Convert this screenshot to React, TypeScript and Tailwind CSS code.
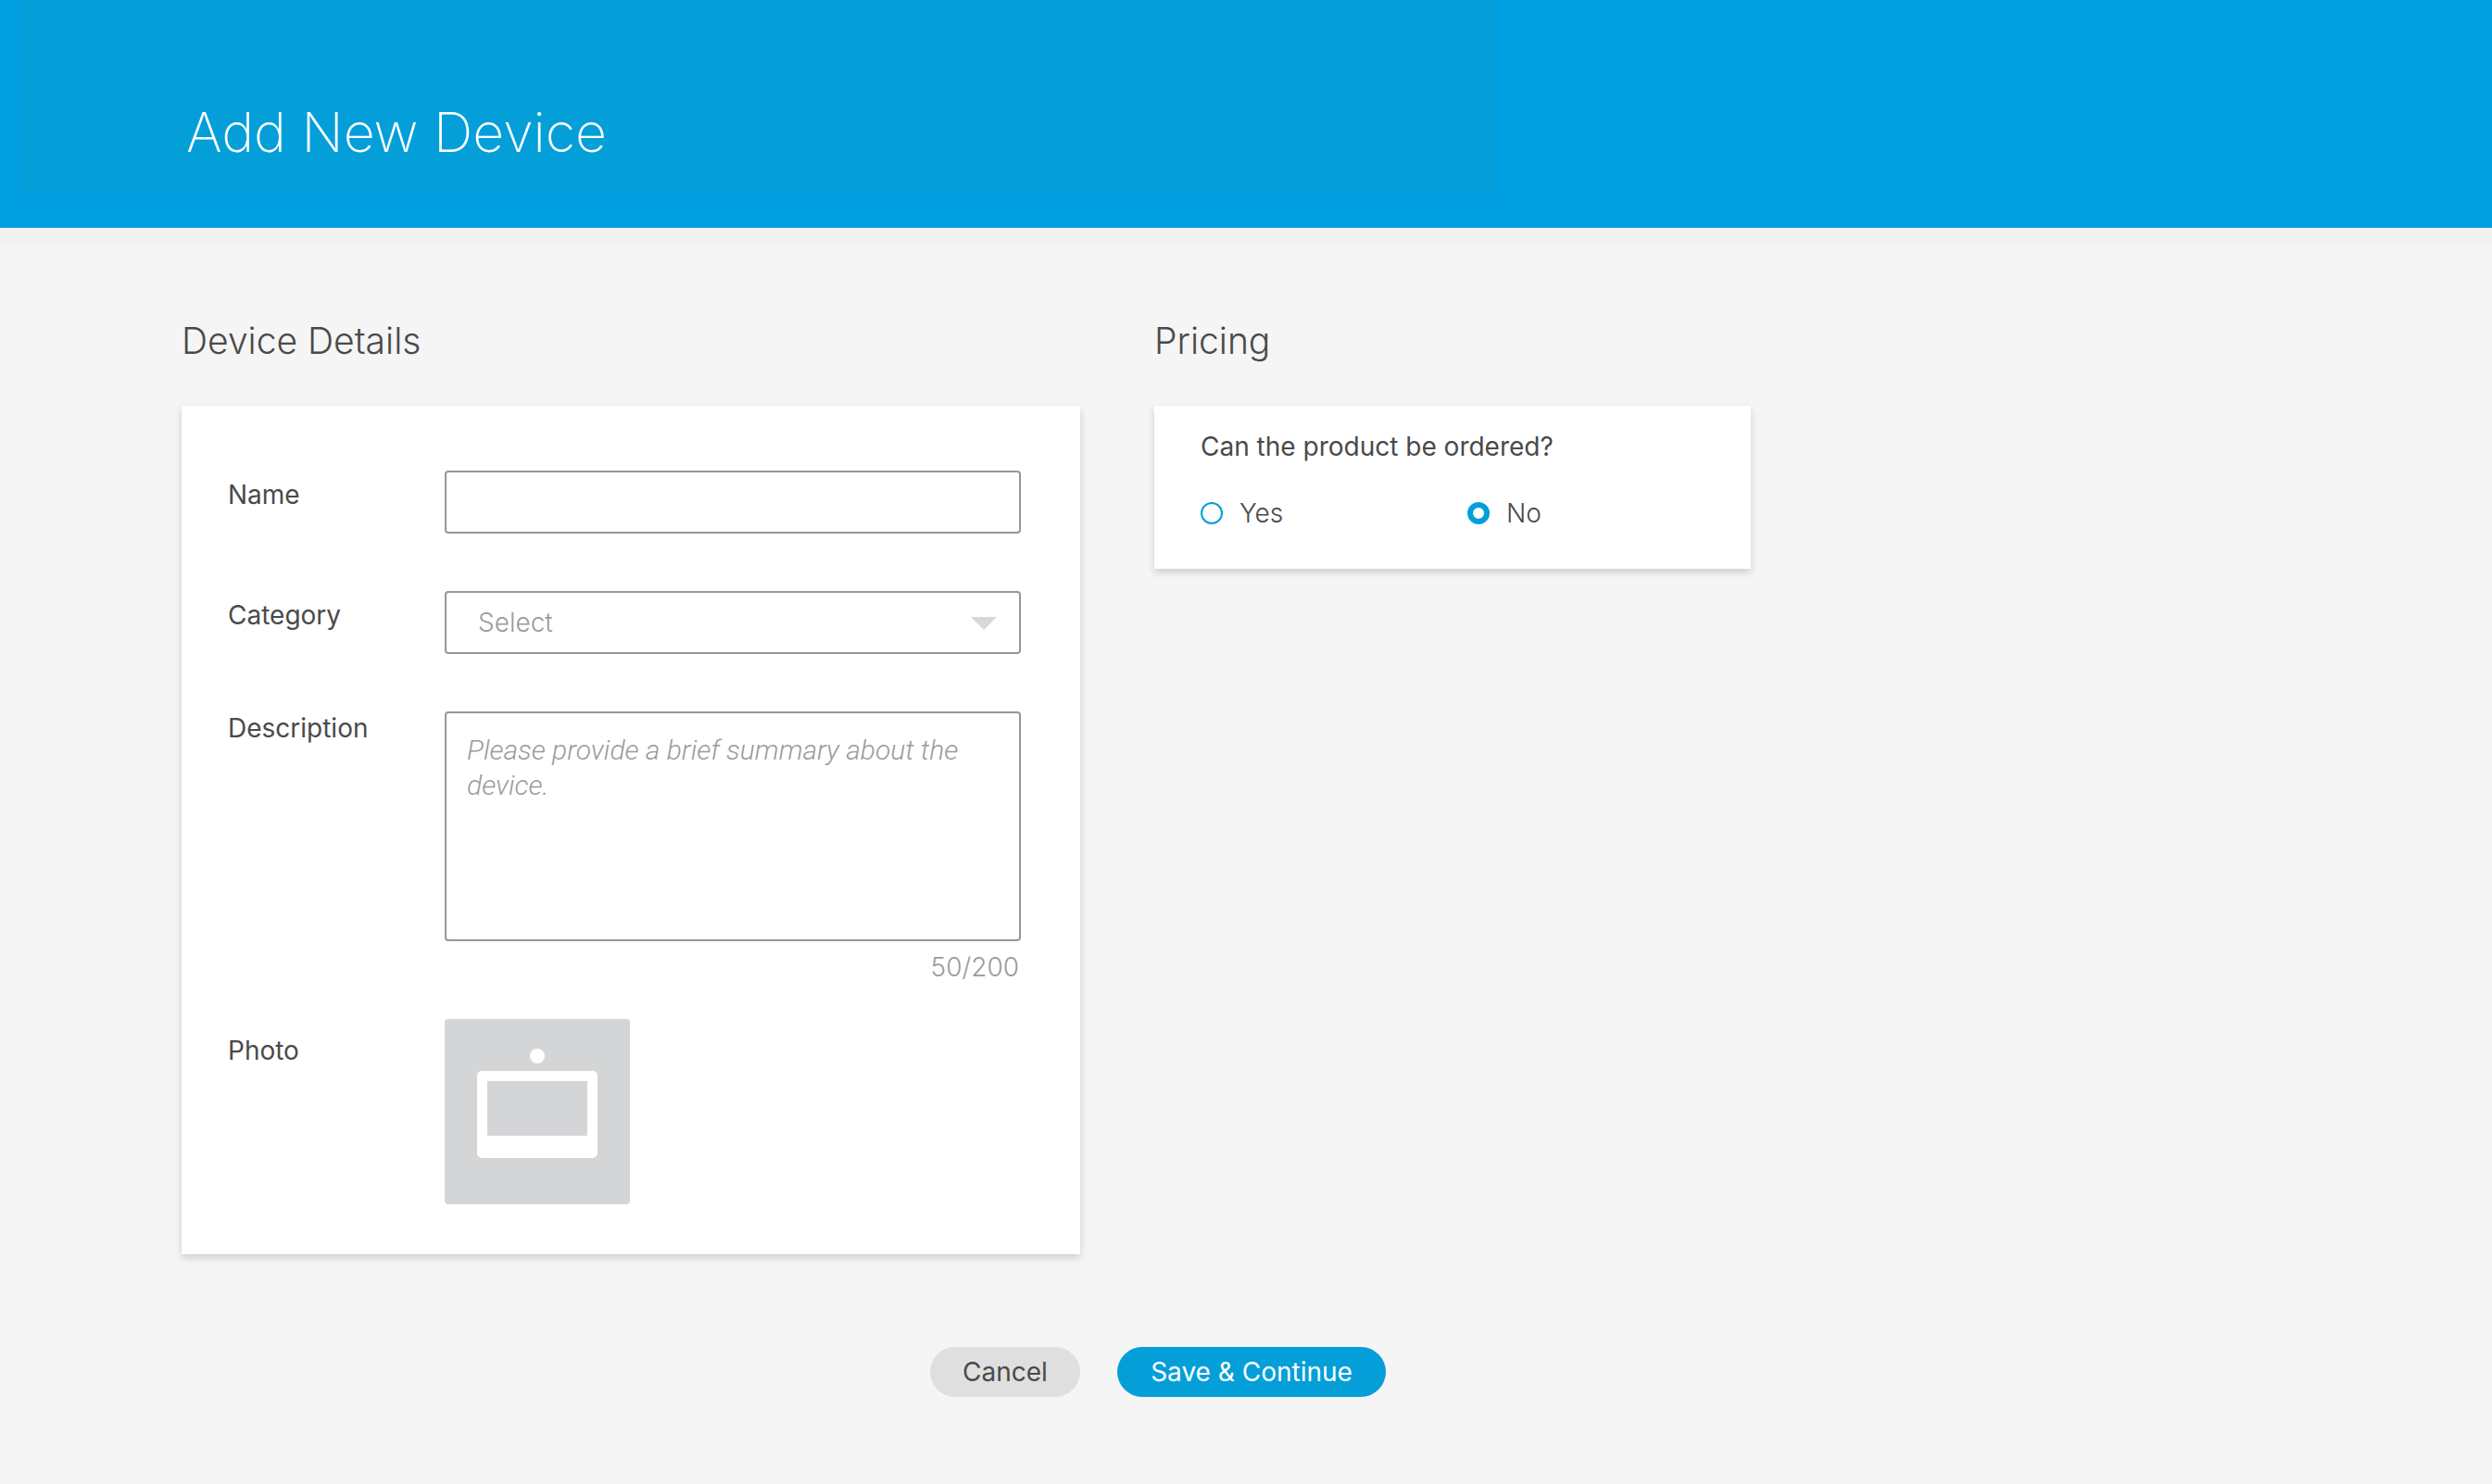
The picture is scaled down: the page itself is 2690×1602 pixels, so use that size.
import type { ReactNode } from "react";

const fieldBorder = "w-full rounded-[4px] border-2 border-[#979797] bg-white outline-none";

function FormRow({
  id,
  label,
  labelClass = "",
  className = "",
  children,
}: {
  id: string;
  label: string;
  labelClass?: string;
  className?: string;
  children: ReactNode;
}) {
  return (
    <div className={`grid grid-cols-[234px_1fr] items-start ${className}`}>
      <label htmlFor={id} className={`leading-9 ${labelClass}`}>
        {label}
      </label>
      <div>{children}</div>
    </div>
  );
}

function DeviceIcon() {
  return (
    <svg viewBox="0 0 200 200" className="size-full" aria-hidden="true">
      <circle cx="100" cy="40" r="8" fill="#fff" />
      <path
        fill="#fff"
        fillRule="evenodd"
        d="M40 56h120a5 5 0 0 1 5 5v84a5 5 0 0 1-5 5H40a5 5 0 0 1-5-5V61a5 5 0 0 1 5-5ZM46 67v59h108V67Z"
      />
    </svg>
  );
}

function Card({ className, children }: { className: string; children: ReactNode }) {
  return (
    <div className={`bg-white shadow-[0_4px_8px_rgba(0,0,0,0.16)] ${className}`}>{children}</div>
  );
}

const radioBase = "size-6 appearance-none rounded-full border-2 border-[#049fd9] bg-white checked:border-[6px]";

export default function App() {
  return (
    <div className="min-h-screen bg-[#f5f5f5] font-['Inter',sans-serif] text-[28px] leading-9 text-[#4a4a4a]">
      <header className="bg-[#009fe2] pb-9 pl-5">
        <div className="w-full max-w-[1596px] bg-[#049fd9] pt-[107px] pb-[31px] pl-[181px]">
          <h1 className="text-[59px] leading-[72px] font-extralight text-white">Add New Device</h1>
        </div>
      </header>
      <div className="h-5 bg-[#f1f1f1]" />

      <main className="pt-[76px] pr-20 pl-[196px]">
        <form className="max-w-[1694px]" onSubmit={(e) => e.preventDefault()}>
          <div className="grid grid-cols-[970fr_644fr] items-start gap-20">
            <section>
              <h2 className="text-[39px] leading-[52px] font-light">Device Details</h2>
              <Card className="mt-11 pt-[70px] pr-16 pb-[54px] pl-[50px]">
                <FormRow id="name" label="Name" labelClass="pt-2">
                  <input id="name" type="text" className={`block h-[68px] px-[22px] ${fieldBorder}`} />
                </FormRow>
                <FormRow id="category" label="Category" labelClass="pt-2" className="mt-[62px]">
                  <div className="relative">
                    <select
                      id="category"
                      className={`block h-[68px] appearance-none pr-16 pl-[34px] font-light text-[#9b9b9b] ${fieldBorder}`}
                    >
                      <option>Select</option>
                    </select>
                    <svg
                      viewBox="0 0 28 14"
                      className="pointer-events-none absolute top-7 right-[26px] h-3.5 w-7"
                      aria-hidden="true"
                    >
                      <path d="M0 0h28L14 14Z" fill="#d8d8d8" />
                    </svg>
                  </div>
                </FormRow>
                <FormRow id="description" label="Description" className="mt-[62px]">
                  <textarea
                    id="description"
                    placeholder="Please provide a brief summary about the device."
                    className={`block h-[248px] resize-none px-[22px] py-[21px] font-['Roboto','Inter',sans-serif] text-[30px] leading-[38px] font-light placeholder:text-[#9b9b9b] placeholder:italic ${fieldBorder}`}
                  />
                  <p className="mt-2.5 pr-0.5 text-right font-light text-[#9b9b9b]">50/200</p>
                </FormRow>
                <FormRow id="photo" label="Photo" labelClass="pt-4" className="mt-[38px]">
                  <button
                    id="photo"
                    type="button"
                    className="block size-[200px] rounded-[4px] bg-[#d4d5d7]"
                  >
                    <DeviceIcon />
                  </button>
                </FormRow>
              </Card>
            </section>

            <section>
              <h2 className="text-[39px] leading-[52px] font-light">Pricing</h2>
              <Card className="mt-11 px-[50px] pt-[26px] pb-[42px]">
                <fieldset>
                  <legend>Can the product be ordered?</legend>
                  <div className="mt-9 grid grid-cols-[288px_1fr] font-light">
                    <label className="flex items-center gap-[18px]">
                      <input type="radio" name="orderable" value="yes" className={radioBase} />
                      Yes
                    </label>
                    <label className="flex items-center gap-[18px]">
                      <input type="radio" name="orderable" value="no" defaultChecked className={radioBase} />
                      No
                    </label>
                  </div>
                </fieldset>
              </Card>
            </section>
          </div>

          <div className="mt-[100px] flex gap-10 pl-[808px]">
            <button type="button" className="h-[54px] w-[162px] rounded-full bg-[#dfdfdf]">
              Cancel
            </button>
            <button type="submit" className="h-[54px] w-[290px] rounded-full bg-[#049fd9] text-white">
              Save &amp; Continue
            </button>
          </div>
        </form>
      </main>
    </div>
  );
}
